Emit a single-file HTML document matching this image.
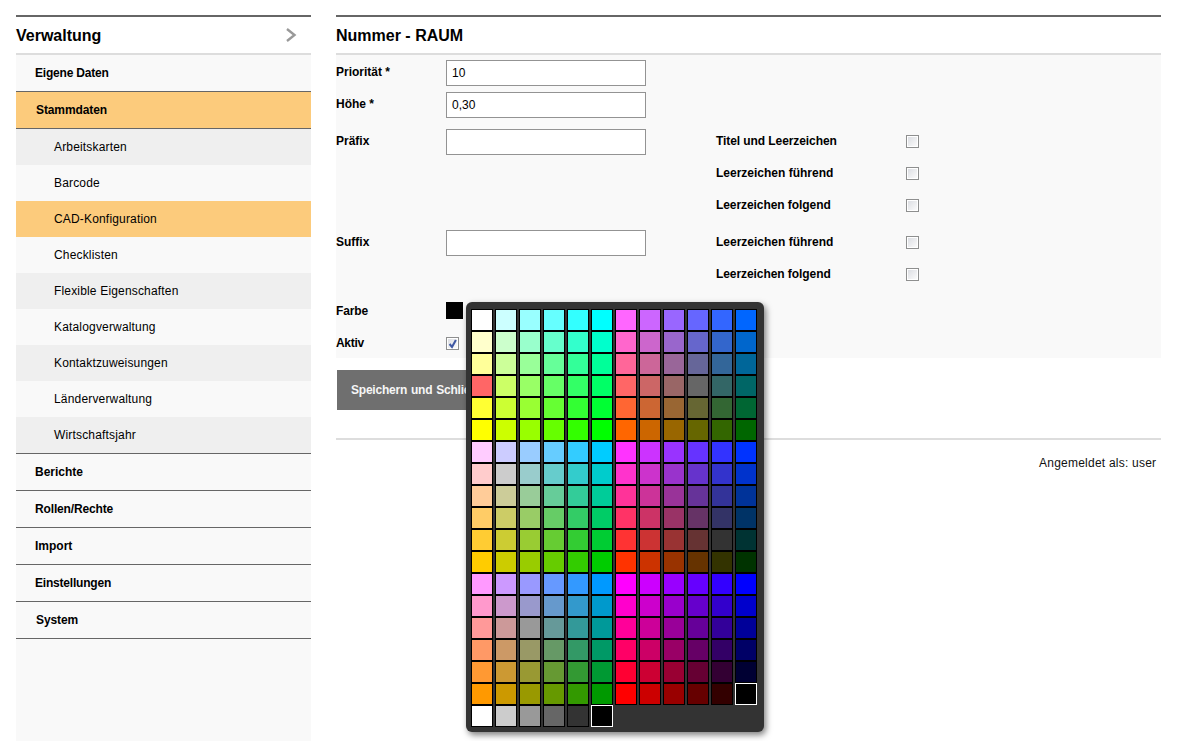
<!DOCTYPE html>
<html><head><meta charset="utf-8">
<style>
*{margin:0;padding:0;box-sizing:border-box}
html,body{width:1178px;height:741px;overflow:hidden;background:#fff}
body{position:relative;font-family:"Liberation Sans",sans-serif;font-size:12px;color:#000}
.a{position:absolute}
.line{position:absolute;height:2px}
.side{position:absolute;left:16px;top:55px;width:295px;height:686px;background:#f9f9f9}
.it{position:absolute;left:0;width:295px;height:37px;line-height:36px;font-weight:bold;border-bottom:1px solid #666;padding-left:19px}
.sub{position:absolute;left:0;width:295px;height:36px;line-height:36px;padding-left:38px;letter-spacing:0.17px}
.lbl{position:absolute;font-weight:bold;line-height:14px}
.inp{position:absolute;left:446px;width:200px;height:26px;border:1px solid #939393;background:#fff;padding-left:5px;line-height:24px}
.cb{position:absolute;width:13px;height:13px;border:1px solid #8e8f8f;background:#fff}
.cb:after{content:"";position:absolute;left:1px;top:1px;width:9px;height:9px;background:linear-gradient(135deg,#dcdee3,#fbfbfb)}
.cp{position:absolute;left:466px;top:302px;width:298px;height:430px;background:#333;border-radius:6px;box-shadow:2px 3px 6px rgba(0,0,0,.5)}
.s{position:absolute;width:22px;height:22px;border:1px solid #000;display:block}
.s.sel{border-color:#fff}
</style></head><body>
<div class="line" style="left:16px;top:15px;width:295px;background:#666"></div>
<div class="a" style="left:16px;top:26px;font-size:16px;font-weight:bold;line-height:20px">Verwaltung</div>
<svg class="a" style="left:284px;top:27px" width="14" height="16" viewBox="0 0 14 16"><path d="M3 2 L10.5 8 L3 14" fill="none" stroke="#999" stroke-width="2.4"/></svg>
<div class="line" style="left:16px;top:53px;width:295px;background:#ddd"></div>
<div class="side">
 <div class="it" style="top:0;letter-spacing:-0.2px">Eigene Daten</div>
 <div class="it" style="top:37px;background:#fccb7c;padding-left:20px;letter-spacing:-0.1px">Stammdaten</div>
 <div class="sub" style="top:74px;background:#efefef">Arbeitskarten</div>
 <div class="sub" style="top:110px">Barcode</div>
 <div class="sub" style="top:146px;background:#fccb7c">CAD-Konfiguration</div>
 <div class="sub" style="top:182px">Checklisten</div>
 <div class="sub" style="top:218px;background:#efefef">Flexible Eigenschaften</div>
 <div class="sub" style="top:254px">Katalogverwaltung</div>
 <div class="sub" style="top:290px;background:#efefef">Kontaktzuweisungen</div>
 <div class="sub" style="top:326px">Länderverwaltung</div>
 <div class="sub" style="top:362px;background:#efefef">Wirtschaftsjahr</div>
 <div class="it" style="top:398px;border-top:1px solid #666;height:38px;line-height:36px">Berichte</div>
 <div class="it" style="top:436px;letter-spacing:-0.15px">Rollen/Rechte</div>
 <div class="it" style="top:473px">Import</div>
 <div class="it" style="top:510px;letter-spacing:-0.2px">Einstellungen</div>
 <div class="it" style="top:547px;padding-left:20px;letter-spacing:-0.1px">System</div>
</div>

<div class="line" style="left:336px;top:15px;width:825px;background:#666"></div>
<div class="a" style="left:336px;top:26px;font-size:16px;font-weight:bold;line-height:20px">Nummer - RAUM</div>
<div class="line" style="left:336px;top:53px;width:825px;background:#ddd"></div>
<div class="a" style="left:336px;top:55px;width:825px;height:303px;background:#f9f9f9"></div>

<div class="lbl" style="left:336px;top:65px">Priorität *</div>
<div class="inp" style="top:60px">10</div>
<div class="lbl" style="left:336px;top:97px">Höhe *</div>
<div class="inp" style="top:92px">0,30</div>
<div class="lbl" style="left:336px;top:134px">Präfix</div>
<div class="inp" style="top:129px"></div>
<div class="lbl" style="left:716px;top:134px;letter-spacing:-0.08px">Titel und Leerzeichen</div>
<div class="cb" style="left:906px;top:135px"></div>
<div class="lbl" style="left:716px;top:166px">Leerzeichen führend</div>
<div class="cb" style="left:906px;top:167px"></div>
<div class="lbl" style="left:716px;top:198px;letter-spacing:-0.07px">Leerzeichen folgend</div>
<div class="cb" style="left:906px;top:199px"></div>
<div class="lbl" style="left:336px;top:235px">Suffix</div>
<div class="inp" style="top:230px"></div>
<div class="lbl" style="left:716px;top:235px">Leerzeichen führend</div>
<div class="cb" style="left:906px;top:236px"></div>
<div class="lbl" style="left:716px;top:267px;letter-spacing:-0.07px">Leerzeichen folgend</div>
<div class="cb" style="left:906px;top:268px"></div>
<div class="lbl" style="left:336px;top:304px;letter-spacing:-0.15px">Farbe</div>
<div class="a" style="left:446px;top:302px;width:17px;height:17px;background:#000"></div>
<div class="lbl" style="left:336px;top:336px;letter-spacing:-0.3px">Aktiv</div>
<div class="cb" style="left:446px;top:337px"><svg class="a" style="left:1px;top:1px;z-index:2" width="11" height="11" viewBox="0 0 11 11"><path d="M1.6 5.0 L4.0 7.9 L7.9 1.0" fill="none" stroke="#3f58a3" stroke-width="2.1"/></svg></div>

<div class="a" style="left:337px;top:370px;width:300px;height:40px;background:#6f6f6f;color:#f6f6f6;font-weight:bold;line-height:40px;padding-left:14px;white-space:nowrap;overflow:hidden;letter-spacing:-0.22px;word-spacing:0.8px">Speichern und Schließen</div>

<div class="line" style="left:336px;top:438px;width:825px;background:#ddd"></div>
<div class="a" style="left:1039px;top:456px;line-height:14px;color:#111;letter-spacing:0.23px">Angemeldet als: user</div>

<div class="cp">
<i class="s" style="left:5px;top:7px;background:#FFFFFF"></i>
<i class="s" style="left:29px;top:7px;background:#CCFFFF"></i>
<i class="s" style="left:53px;top:7px;background:#99FFFF"></i>
<i class="s" style="left:77px;top:7px;background:#66FFFF"></i>
<i class="s" style="left:101px;top:7px;background:#33FFFF"></i>
<i class="s" style="left:125px;top:7px;background:#00FFFF"></i>
<i class="s" style="left:149px;top:7px;background:#FF66FF"></i>
<i class="s" style="left:173px;top:7px;background:#CC66FF"></i>
<i class="s" style="left:197px;top:7px;background:#9966FF"></i>
<i class="s" style="left:221px;top:7px;background:#6666FF"></i>
<i class="s" style="left:245px;top:7px;background:#3366FF"></i>
<i class="s" style="left:269px;top:7px;background:#0066FF"></i>
<i class="s" style="left:5px;top:29px;background:#FFFFCC"></i>
<i class="s" style="left:29px;top:29px;background:#CCFFCC"></i>
<i class="s" style="left:53px;top:29px;background:#99FFCC"></i>
<i class="s" style="left:77px;top:29px;background:#66FFCC"></i>
<i class="s" style="left:101px;top:29px;background:#33FFCC"></i>
<i class="s" style="left:125px;top:29px;background:#00FFCC"></i>
<i class="s" style="left:149px;top:29px;background:#FF66CC"></i>
<i class="s" style="left:173px;top:29px;background:#CC66CC"></i>
<i class="s" style="left:197px;top:29px;background:#9966CC"></i>
<i class="s" style="left:221px;top:29px;background:#6666CC"></i>
<i class="s" style="left:245px;top:29px;background:#3366CC"></i>
<i class="s" style="left:269px;top:29px;background:#0066CC"></i>
<i class="s" style="left:5px;top:51px;background:#FFFF99"></i>
<i class="s" style="left:29px;top:51px;background:#CCFF99"></i>
<i class="s" style="left:53px;top:51px;background:#99FF99"></i>
<i class="s" style="left:77px;top:51px;background:#66FF99"></i>
<i class="s" style="left:101px;top:51px;background:#33FF99"></i>
<i class="s" style="left:125px;top:51px;background:#00FF99"></i>
<i class="s" style="left:149px;top:51px;background:#FF6699"></i>
<i class="s" style="left:173px;top:51px;background:#CC6699"></i>
<i class="s" style="left:197px;top:51px;background:#996699"></i>
<i class="s" style="left:221px;top:51px;background:#666699"></i>
<i class="s" style="left:245px;top:51px;background:#336699"></i>
<i class="s" style="left:269px;top:51px;background:#006699"></i>
<i class="s" style="left:5px;top:73px;background:#FF6666"></i>
<i class="s" style="left:29px;top:73px;background:#CCFF66"></i>
<i class="s" style="left:53px;top:73px;background:#99FF66"></i>
<i class="s" style="left:77px;top:73px;background:#66FF66"></i>
<i class="s" style="left:101px;top:73px;background:#33FF66"></i>
<i class="s" style="left:125px;top:73px;background:#00FF66"></i>
<i class="s" style="left:149px;top:73px;background:#FF6666"></i>
<i class="s" style="left:173px;top:73px;background:#CC6666"></i>
<i class="s" style="left:197px;top:73px;background:#996666"></i>
<i class="s" style="left:221px;top:73px;background:#666666"></i>
<i class="s" style="left:245px;top:73px;background:#336666"></i>
<i class="s" style="left:269px;top:73px;background:#006666"></i>
<i class="s" style="left:5px;top:95px;background:#FFFF33"></i>
<i class="s" style="left:29px;top:95px;background:#CCFF33"></i>
<i class="s" style="left:53px;top:95px;background:#99FF33"></i>
<i class="s" style="left:77px;top:95px;background:#66FF33"></i>
<i class="s" style="left:101px;top:95px;background:#33FF33"></i>
<i class="s" style="left:125px;top:95px;background:#00FF33"></i>
<i class="s" style="left:149px;top:95px;background:#FF6633"></i>
<i class="s" style="left:173px;top:95px;background:#CC6633"></i>
<i class="s" style="left:197px;top:95px;background:#996633"></i>
<i class="s" style="left:221px;top:95px;background:#666633"></i>
<i class="s" style="left:245px;top:95px;background:#336633"></i>
<i class="s" style="left:269px;top:95px;background:#006633"></i>
<i class="s" style="left:5px;top:117px;background:#FFFF00"></i>
<i class="s" style="left:29px;top:117px;background:#CCFF00"></i>
<i class="s" style="left:53px;top:117px;background:#99FF00"></i>
<i class="s" style="left:77px;top:117px;background:#66FF00"></i>
<i class="s" style="left:101px;top:117px;background:#33FF00"></i>
<i class="s" style="left:125px;top:117px;background:#00FF00"></i>
<i class="s" style="left:149px;top:117px;background:#FF6600"></i>
<i class="s" style="left:173px;top:117px;background:#CC6600"></i>
<i class="s" style="left:197px;top:117px;background:#996600"></i>
<i class="s" style="left:221px;top:117px;background:#666600"></i>
<i class="s" style="left:245px;top:117px;background:#336600"></i>
<i class="s" style="left:269px;top:117px;background:#006600"></i>
<i class="s" style="left:5px;top:139px;background:#FFCCFF"></i>
<i class="s" style="left:29px;top:139px;background:#CCCCFF"></i>
<i class="s" style="left:53px;top:139px;background:#99CCFF"></i>
<i class="s" style="left:77px;top:139px;background:#66CCFF"></i>
<i class="s" style="left:101px;top:139px;background:#33CCFF"></i>
<i class="s" style="left:125px;top:139px;background:#00CCFF"></i>
<i class="s" style="left:149px;top:139px;background:#FF33FF"></i>
<i class="s" style="left:173px;top:139px;background:#CC33FF"></i>
<i class="s" style="left:197px;top:139px;background:#9933FF"></i>
<i class="s" style="left:221px;top:139px;background:#6633FF"></i>
<i class="s" style="left:245px;top:139px;background:#3333FF"></i>
<i class="s" style="left:269px;top:139px;background:#0033FF"></i>
<i class="s" style="left:5px;top:161px;background:#FFCCCC"></i>
<i class="s" style="left:29px;top:161px;background:#CCCCCC"></i>
<i class="s" style="left:53px;top:161px;background:#99CCCC"></i>
<i class="s" style="left:77px;top:161px;background:#66CCCC"></i>
<i class="s" style="left:101px;top:161px;background:#33CCCC"></i>
<i class="s" style="left:125px;top:161px;background:#00CCCC"></i>
<i class="s" style="left:149px;top:161px;background:#FF33CC"></i>
<i class="s" style="left:173px;top:161px;background:#CC33CC"></i>
<i class="s" style="left:197px;top:161px;background:#9933CC"></i>
<i class="s" style="left:221px;top:161px;background:#6633CC"></i>
<i class="s" style="left:245px;top:161px;background:#3333CC"></i>
<i class="s" style="left:269px;top:161px;background:#0033CC"></i>
<i class="s" style="left:5px;top:183px;background:#FFCC99"></i>
<i class="s" style="left:29px;top:183px;background:#CCCC99"></i>
<i class="s" style="left:53px;top:183px;background:#99CC99"></i>
<i class="s" style="left:77px;top:183px;background:#66CC99"></i>
<i class="s" style="left:101px;top:183px;background:#33CC99"></i>
<i class="s" style="left:125px;top:183px;background:#00CC99"></i>
<i class="s" style="left:149px;top:183px;background:#FF3399"></i>
<i class="s" style="left:173px;top:183px;background:#CC3399"></i>
<i class="s" style="left:197px;top:183px;background:#993399"></i>
<i class="s" style="left:221px;top:183px;background:#663399"></i>
<i class="s" style="left:245px;top:183px;background:#333399"></i>
<i class="s" style="left:269px;top:183px;background:#003399"></i>
<i class="s" style="left:5px;top:205px;background:#FFCC66"></i>
<i class="s" style="left:29px;top:205px;background:#CCCC66"></i>
<i class="s" style="left:53px;top:205px;background:#99CC66"></i>
<i class="s" style="left:77px;top:205px;background:#66CC66"></i>
<i class="s" style="left:101px;top:205px;background:#33CC66"></i>
<i class="s" style="left:125px;top:205px;background:#00CC66"></i>
<i class="s" style="left:149px;top:205px;background:#FF3366"></i>
<i class="s" style="left:173px;top:205px;background:#CC3366"></i>
<i class="s" style="left:197px;top:205px;background:#993366"></i>
<i class="s" style="left:221px;top:205px;background:#663366"></i>
<i class="s" style="left:245px;top:205px;background:#333366"></i>
<i class="s" style="left:269px;top:205px;background:#003366"></i>
<i class="s" style="left:5px;top:227px;background:#FFCC33"></i>
<i class="s" style="left:29px;top:227px;background:#CCCC33"></i>
<i class="s" style="left:53px;top:227px;background:#99CC33"></i>
<i class="s" style="left:77px;top:227px;background:#66CC33"></i>
<i class="s" style="left:101px;top:227px;background:#33CC33"></i>
<i class="s" style="left:125px;top:227px;background:#00CC33"></i>
<i class="s" style="left:149px;top:227px;background:#FF3333"></i>
<i class="s" style="left:173px;top:227px;background:#CC3333"></i>
<i class="s" style="left:197px;top:227px;background:#993333"></i>
<i class="s" style="left:221px;top:227px;background:#663333"></i>
<i class="s" style="left:245px;top:227px;background:#333333"></i>
<i class="s" style="left:269px;top:227px;background:#003333"></i>
<i class="s" style="left:5px;top:249px;background:#FFCC00"></i>
<i class="s" style="left:29px;top:249px;background:#CCCC00"></i>
<i class="s" style="left:53px;top:249px;background:#99CC00"></i>
<i class="s" style="left:77px;top:249px;background:#66CC00"></i>
<i class="s" style="left:101px;top:249px;background:#33CC00"></i>
<i class="s" style="left:125px;top:249px;background:#00CC00"></i>
<i class="s" style="left:149px;top:249px;background:#FF3300"></i>
<i class="s" style="left:173px;top:249px;background:#CC3300"></i>
<i class="s" style="left:197px;top:249px;background:#993300"></i>
<i class="s" style="left:221px;top:249px;background:#663300"></i>
<i class="s" style="left:245px;top:249px;background:#333300"></i>
<i class="s" style="left:269px;top:249px;background:#003300"></i>
<i class="s" style="left:5px;top:271px;background:#FF99FF"></i>
<i class="s" style="left:29px;top:271px;background:#CC99FF"></i>
<i class="s" style="left:53px;top:271px;background:#9999FF"></i>
<i class="s" style="left:77px;top:271px;background:#6699FF"></i>
<i class="s" style="left:101px;top:271px;background:#3399FF"></i>
<i class="s" style="left:125px;top:271px;background:#0099FF"></i>
<i class="s" style="left:149px;top:271px;background:#FF00FF"></i>
<i class="s" style="left:173px;top:271px;background:#CC00FF"></i>
<i class="s" style="left:197px;top:271px;background:#9900FF"></i>
<i class="s" style="left:221px;top:271px;background:#6600FF"></i>
<i class="s" style="left:245px;top:271px;background:#3300FF"></i>
<i class="s" style="left:269px;top:271px;background:#0000FF"></i>
<i class="s" style="left:5px;top:293px;background:#FF99CC"></i>
<i class="s" style="left:29px;top:293px;background:#CC99CC"></i>
<i class="s" style="left:53px;top:293px;background:#9999CC"></i>
<i class="s" style="left:77px;top:293px;background:#6699CC"></i>
<i class="s" style="left:101px;top:293px;background:#3399CC"></i>
<i class="s" style="left:125px;top:293px;background:#0099CC"></i>
<i class="s" style="left:149px;top:293px;background:#FF00CC"></i>
<i class="s" style="left:173px;top:293px;background:#CC00CC"></i>
<i class="s" style="left:197px;top:293px;background:#9900CC"></i>
<i class="s" style="left:221px;top:293px;background:#6600CC"></i>
<i class="s" style="left:245px;top:293px;background:#3300CC"></i>
<i class="s" style="left:269px;top:293px;background:#0000CC"></i>
<i class="s" style="left:5px;top:315px;background:#FF9999"></i>
<i class="s" style="left:29px;top:315px;background:#CC9999"></i>
<i class="s" style="left:53px;top:315px;background:#999999"></i>
<i class="s" style="left:77px;top:315px;background:#669999"></i>
<i class="s" style="left:101px;top:315px;background:#339999"></i>
<i class="s" style="left:125px;top:315px;background:#009999"></i>
<i class="s" style="left:149px;top:315px;background:#FF0099"></i>
<i class="s" style="left:173px;top:315px;background:#CC0099"></i>
<i class="s" style="left:197px;top:315px;background:#990099"></i>
<i class="s" style="left:221px;top:315px;background:#660099"></i>
<i class="s" style="left:245px;top:315px;background:#330099"></i>
<i class="s" style="left:269px;top:315px;background:#000099"></i>
<i class="s" style="left:5px;top:337px;background:#FF9966"></i>
<i class="s" style="left:29px;top:337px;background:#CC9966"></i>
<i class="s" style="left:53px;top:337px;background:#999966"></i>
<i class="s" style="left:77px;top:337px;background:#669966"></i>
<i class="s" style="left:101px;top:337px;background:#339966"></i>
<i class="s" style="left:125px;top:337px;background:#009966"></i>
<i class="s" style="left:149px;top:337px;background:#FF0066"></i>
<i class="s" style="left:173px;top:337px;background:#CC0066"></i>
<i class="s" style="left:197px;top:337px;background:#990066"></i>
<i class="s" style="left:221px;top:337px;background:#660066"></i>
<i class="s" style="left:245px;top:337px;background:#330066"></i>
<i class="s" style="left:269px;top:337px;background:#000066"></i>
<i class="s" style="left:5px;top:359px;background:#FF9933"></i>
<i class="s" style="left:29px;top:359px;background:#CC9933"></i>
<i class="s" style="left:53px;top:359px;background:#999933"></i>
<i class="s" style="left:77px;top:359px;background:#669933"></i>
<i class="s" style="left:101px;top:359px;background:#339933"></i>
<i class="s" style="left:125px;top:359px;background:#009933"></i>
<i class="s" style="left:149px;top:359px;background:#FF0033"></i>
<i class="s" style="left:173px;top:359px;background:#CC0033"></i>
<i class="s" style="left:197px;top:359px;background:#990033"></i>
<i class="s" style="left:221px;top:359px;background:#660033"></i>
<i class="s" style="left:245px;top:359px;background:#330033"></i>
<i class="s" style="left:269px;top:359px;background:#000033"></i>
<i class="s" style="left:5px;top:381px;background:#FF9900"></i>
<i class="s" style="left:29px;top:381px;background:#CC9900"></i>
<i class="s" style="left:53px;top:381px;background:#999900"></i>
<i class="s" style="left:77px;top:381px;background:#669900"></i>
<i class="s" style="left:101px;top:381px;background:#339900"></i>
<i class="s" style="left:125px;top:381px;background:#009900"></i>
<i class="s" style="left:149px;top:381px;background:#FF0000"></i>
<i class="s" style="left:173px;top:381px;background:#CC0000"></i>
<i class="s" style="left:197px;top:381px;background:#990000"></i>
<i class="s" style="left:221px;top:381px;background:#660000"></i>
<i class="s" style="left:245px;top:381px;background:#330000"></i>
<i class="s sel" style="left:269px;top:381px;background:#000000"></i>
<i class="s" style="left:5px;top:403px;background:#FFFFFF"></i>
<i class="s" style="left:29px;top:403px;background:#CCCCCC"></i>
<i class="s" style="left:53px;top:403px;background:#999999"></i>
<i class="s" style="left:77px;top:403px;background:#666666"></i>
<i class="s" style="left:101px;top:403px;background:#333333"></i>
<i class="s sel" style="left:125px;top:403px;background:#000000"></i>
</div>
</body></html>
